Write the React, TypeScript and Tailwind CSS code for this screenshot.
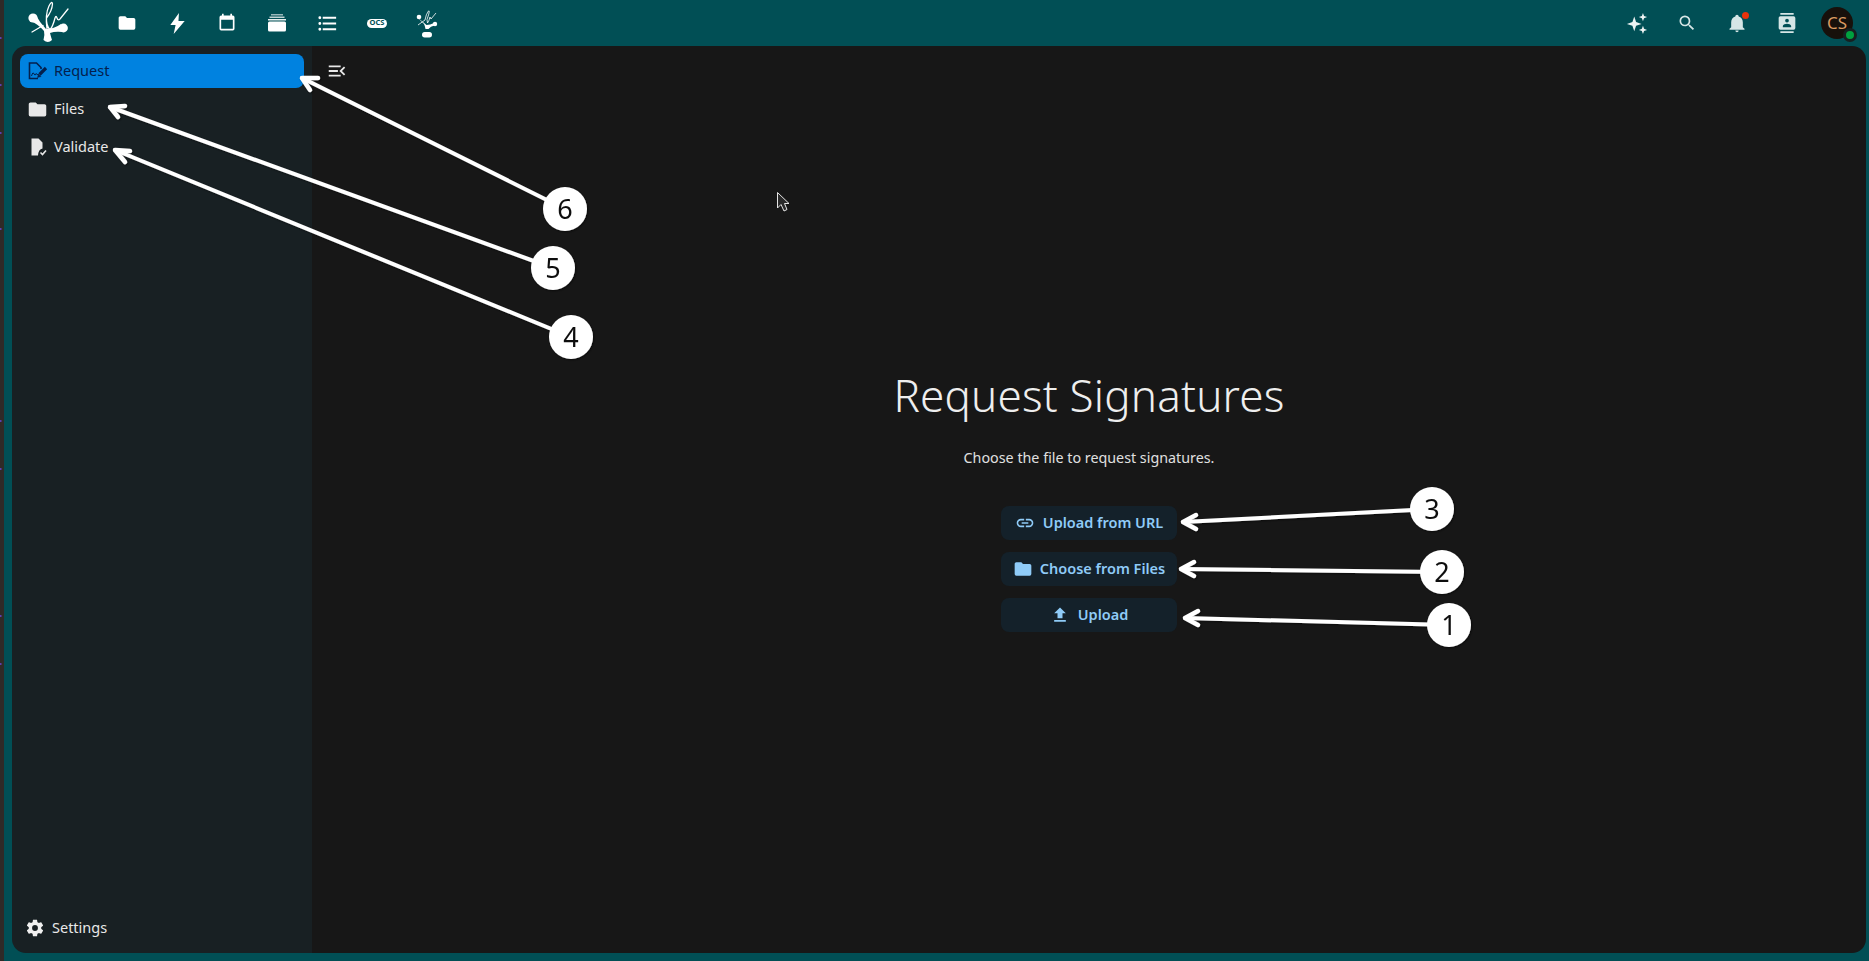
const FONT = "font-['Noto_Sans',sans-serif]";

// mdi paths used across the page
const ICONS = {
  folder: 'M10,4H4C2.89,4 2,4.89 2,6V18A2,2 0 0,0 4,20H20A2,2 0 0,0 22,18V8C22,6.89 21.1,6 20,6H12L10,4Z',
  bolt: 'M13.5 1 4.5 13.5H10L8 23 19.5 9.5H13L13.5 1Z',
  calendar: 'M19 3h-1V1h-2v2H8V1H6v2H5a2 2 0 0 0-2 2v14a2 2 0 0 0 2 2h14a2 2 0 0 0 2-2V5a2 2 0 0 0-2-2zm0 16H5V8h14v11z',
  list: 'M7,5H21V7H7V5M7,13V11H21V13H7M4,4.5A1.5,1.5 0 0,1 5.5,6A1.5,1.5 0 0,1 4,7.5A1.5,1.5 0 0,1 2.5,6A1.5,1.5 0 0,1 4,4.5M4,10.5A1.5,1.5 0 0,1 5.5,12A1.5,1.5 0 0,1 4,13.5A1.5,1.5 0 0,1 2.5,12A1.5,1.5 0 0,1 4,10.5M7,19V17H21V19H7M4,16.5A1.5,1.5 0 0,1 5.5,18A1.5,1.5 0 0,1 4,19.5A1.5,1.5 0 0,1 2.5,18A1.5,1.5 0 0,1 4,16.5Z',
  search: 'M9.5,3A6.5,6.5 0 0,1 16,9.5C16,11.11 15.41,12.59 14.44,13.73L14.71,14H15.5L20.5,19L19,20.5L14,15.5V14.71L13.73,14.44C12.59,15.41 11.11,16 9.5,16A6.5,6.5 0 0,1 3,9.5A6.5,6.5 0 0,1 9.5,3M9.5,5C7,5 5,7 5,9.5C5,12 7,14 9.5,14C12,14 14,12 14,9.5C14,7 12,5 9.5,5Z',
  bell: 'M21,19V20H3V19L5,17V11C5,7.9 7.03,5.17 10,4.29C10,4.19 10,4.1 10,4A2,2 0 0,1 12,2A2,2 0 0,1 14,4C14,4.1 14,4.19 14,4.29C16.97,5.17 19,7.9 19,11V17L21,19M14,21A2,2 0 0,1 12,23A2,2 0 0,1 10,21',
  contacts: 'M20,0H4V2H20V0M4,24H20V22H4V24M20,4H4A2,2 0 0,0 2,6V18A2,2 0 0,0 4,20H20A2,2 0 0,0 22,18V6A2,2 0 0,0 20,4M12,6.75A2.25,2.25 0 0,1 14.25,9A2.25,2.25 0 0,1 12,11.25A2.25,2.25 0 0,1 9.75,9A2.25,2.25 0 0,1 12,6.75M17,17H7V15.5C7,13.83 10.33,13 12,13C13.67,13 17,13.83 17,15.5V17Z',
  cog: 'M12,15.5A3.5,3.5 0 0,1 8.5,12A3.5,3.5 0 0,1 12,8.5A3.5,3.5 0 0,1 15.5,12A3.5,3.5 0 0,1 12,15.5M19.43,12.97C19.47,12.65 19.5,12.33 19.5,12C19.5,11.67 19.47,11.34 19.43,11L21.54,9.37C21.73,9.22 21.78,8.95 21.66,8.73L19.66,5.27C19.54,5.05 19.27,4.96 19.05,5.05L16.56,6.05C16.04,5.66 15.5,5.32 14.87,5.07L14.5,2.42C14.46,2.18 14.25,2 14,2H10C9.75,2 9.54,2.18 9.5,2.42L9.13,5.07C8.5,5.32 7.96,5.66 7.44,6.05L4.95,5.05C4.73,4.96 4.46,5.05 4.34,5.27L2.34,8.73C2.21,8.95 2.27,9.22 2.46,9.37L4.57,11C4.53,11.34 4.5,11.67 4.5,12C4.5,12.33 4.53,12.65 4.57,12.97L2.46,14.63C2.27,14.78 2.21,15.05 2.34,15.27L4.34,18.73C4.46,18.95 4.73,19.03 4.95,18.95L7.44,17.94C7.96,18.34 8.5,18.68 9.13,18.93L9.5,21.58C9.54,21.82 9.75,22 10,22H14C14.25,22 14.46,21.82 14.5,21.58L14.87,18.93C15.5,18.67 16.04,18.34 16.56,17.94L19.05,18.95C19.27,19.03 19.54,18.95 19.66,18.73L21.66,15.27C21.78,15.05 21.73,14.78 21.54,14.63L19.43,12.97Z',
  link: 'M3.9,12C3.9,10.29 5.29,8.9 7,8.9H11V7H7A5,5 0 0,0 2,12A5,5 0 0,0 7,17H11V15.1H7C5.29,15.1 3.9,13.71 3.9,12M8,13H16V11H8V13M17,7H13V8.9H17C18.71,8.9 20.1,10.29 20.1,12C20.1,13.71 18.71,15.1 17,15.1H13V17H17A5,5 0 0,0 22,12A5,5 0 0,0 17,7Z',
  upload: 'M9,16V10H5L12,3L19,10H15V16H9M5,20V18H19V20H5Z',
  menuOpen: 'M21,15.61L19.59,17L14.58,12L19.59,7L21,8.39L17.44,12L21,15.61M3,6H16V8H3V6M3,13V11H13V13H3M3,18V16H16V18H3Z',
};

function Icon({ d, className }: { d: string; className: string }) {
  return (
    <svg viewBox="0 0 24 24" fill="currentColor" className={className}>
      <path d={d} />
    </svg>
  );
}

function Logo() {
  return (
    <svg viewBox="0 0 46 44" className="h-[44px] w-[46px]" fill="none">
      <circle cx="7" cy="17" r="4.6" fill="#fff" />
      <circle cx="37.5" cy="27" r="4.4" fill="#fff" />
      <path d="M4.5 20 L9.5 13.5 Q14 22 20 28 Q28 28 35 23 L37 31 Q29 30 24 32 Q25 36 26 39 Q22 43 17.5 39 Q19 34 18 30 Q12 23 4.5 20Z" fill="#fff" />
      <path
        d="M6 31 L17 24.5 M21 28 Q19 13 23 5 Q26 -1 26.5 3 Q26 10 20.5 17 Q20 24 24 29 Q27 25 29 17 Q30 14 31 17 Q32 20 34 18 L42 8"
        stroke="#fff"
        strokeWidth="1.3"
        strokeLinecap="round"
      />
    </svg>
  );
}

function SmallSign() {
  return (
    <svg viewBox="0 0 24 30" className="h-[30px] w-[24px]" fill="none">
      <circle cx="4" cy="9" r="2.3" fill="#fff" />
      <circle cx="20" cy="16" r="2.2" fill="#fff" />
      <path d="M3 10 Q8 14 11.5 17 Q15 17 19 15 L19.5 17.5 Q15.5 18 13.5 21 L10.5 21 Q10 18 9 16 Q6 13 3 10Z" fill="#fff" />
      <path d="M3 17 L10 12 Q11 6 13.5 3 Q15 2 13.5 7 Q11 12 12.5 15 Q14 13 15 9 L16 11 L21 5" stroke="#fff" strokeWidth="0.8" />
      <rect x="7" y="24" width="10" height="5.5" rx="2.7" fill="#fff" />
    </svg>
  );
}

function AppIcon({ children }: { children: React.ReactNode }) {
  return <div className="flex h-[46px] w-[50px] items-center justify-center text-white">{children}</div>;
}

function NavItem({ label, icon, active }: { label: string; icon: React.ReactNode; active?: boolean }) {
  return (
    <div
      className={
        'flex h-[34px] items-center rounded-lg pl-[7px] text-[14.5px] ' +
        (active ? 'bg-[#0082e0] text-[#04204d]' : 'text-[#e8e8e8]')
      }
    >
      <div className="flex w-[26px] items-center">{icon}</div>
      <span className="ml-[1px]">{label}</span>
    </div>
  );
}

function ActionButton({ label, icon, gap }: { label: string; icon: React.ReactNode; gap: string }) {
  return (
    <button className={'flex h-[34px] w-[176px] items-center justify-center rounded-lg bg-[#14212a] text-[14.5px] font-semibold text-[#8fcbf7] ' + gap}>
      {icon}
      <span>{label}</span>
    </button>
  );
}

const CALLOUTS = [
  { n: '6', cx: 565, cy: 209, tx: 302, ty: 78, hx: [318, 78, 310, 90] },
  { n: '5', cx: 553, cy: 268, tx: 110, ty: 107, hx: [125, 106, 118, 117] },
  { n: '4', cx: 571, cy: 337, tx: 115, ty: 150, hx: [130, 151, 125, 162] },
  { n: '3', cx: 1432, cy: 509, tx: 1183, ty: 522, hx: [1196, 515, 1196, 529] },
  { n: '2', cx: 1442, cy: 572, tx: 1181, ty: 569, hx: [1194, 562, 1194, 576] },
  { n: '1', cx: 1449, cy: 625, tx: 1185, ty: 618, hx: [1198, 611, 1198, 625] },
];

// bits of wallpaper showing on the window's left edge
const EDGE_TICKS = [37, 84, 132, 228, 420, 468, 615, 663];

// annotation arrows and the mouse pointer drawn over the page
function Annotations() {
  return (
    <svg viewBox="0 0 1869 961" className="pointer-events-none absolute inset-0 h-[961px] w-[1869px]">
      <defs>
        <filter id="sh" x="-10%" y="-10%" width="120%" height="120%">
          <feDropShadow dx="1" dy="1" stdDeviation="1.2" floodColor="#000" floodOpacity="0.55" />
        </filter>
      </defs>
      {EDGE_TICKS.map((y) => (
        <rect key={y} x="0" y={y} width="1.5" height="2" fill="#5b3fb0" />
      ))}
      {CALLOUTS.map((c) => (
        <g key={c.n} filter="url(#sh)">
          <path
            d={`M${c.cx} ${c.cy} L${c.tx} ${c.ty}`}
            stroke="#fff"
            strokeWidth="4"
            strokeLinecap="round"
            fill="none"
          />
          <path
            d={`M${c.hx[0]} ${c.hx[1]} L${c.tx} ${c.ty} L${c.hx[2]} ${c.hx[3]}`}
            stroke="#fff"
            strokeWidth="4.5"
            strokeLinecap="round"
            strokeLinejoin="round"
            fill="none"
          />
          <circle cx={c.cx} cy={c.cy} r="22" fill="#fff" />
          <text x={c.cx} y={c.cy + 9.5} textAnchor="middle" fontSize="27" fill="#111" fontFamily="Noto Sans, sans-serif">
            {c.n}
          </text>
        </g>
      ))}
      <path d="M777.5 192.5 V208 L781 204.5 L784 211 L787 209.5 L784.5 203.5 L789 203.5 Z" fill="#2a2a2a" stroke="#e5e5e5" strokeWidth="1" />
    </svg>
  );
}

export default function App() {
  return (
    <div className={'relative flex h-[961px] w-[1869px] overflow-hidden bg-[#014f55] ' + FONT}>
      <div className="w-1 shrink-0 bg-[#2f2a27]" />
      <div className="flex min-w-0 flex-1 flex-col">
        <header className="flex h-[46px] shrink-0 items-center">
          <div className="ml-[22px] mr-[30px] flex w-[46px] items-center">
            <Logo />
          </div>
          <AppIcon><Icon d={ICONS.folder} className="h-[20px] w-[20px]" /></AppIcon>
          <AppIcon><Icon d={ICONS.bolt} className="h-[23px] w-[23px]" /></AppIcon>
          <AppIcon><Icon d={ICONS.calendar} className="h-[20px] w-[20px]" /></AppIcon>
          <AppIcon>
            <svg viewBox="0 0 20 20" className="h-[20px] w-[20px]" fill="#fff">
              <rect x="4" y="1" width="12" height="1.5" opacity="0.6" />
              <rect x="2.5" y="3.5" width="15" height="1.5" opacity="0.75" />
              <rect x="1" y="6" width="18" height="1.5" opacity="0.9" />
              <rect x="1" y="8.5" width="18" height="10" rx="1.5" />
            </svg>
          </AppIcon>
          <AppIcon><Icon d={ICONS.list} className="h-[23px] w-[23px]" /></AppIcon>
          <AppIcon>
            <div className="flex h-[9px] w-[20px] items-center justify-center rounded-full bg-white">
              <span className="text-[7.5px] font-bold leading-none text-[#014f55]">OCS</span>
            </div>
          </AppIcon>
          <AppIcon><SmallSign /></AppIcon>

          <div className="ml-auto flex items-center pr-[13px]">
            <AppIcon>
              <svg viewBox="0 0 24 24" className="h-[22px] w-[22px]" fill="#eef4f4">
                <path d="M9 5 L11 11 L17 13 L11 15 L9 21 L7 15 L1 13 L7 11Z" />
                <path d="M18.5 1 L19.7 4.3 L23 5.5 L19.7 6.7 L18.5 10 L17.3 6.7 L14 5.5 L17.3 4.3Z" />
                <path d="M18.5 15 L19.7 18.3 L23 19.5 L19.7 20.7 L18.5 24 L17.3 20.7 L14 19.5 L17.3 18.3Z" />
              </svg>
            </AppIcon>
            <AppIcon><Icon d={ICONS.search} className="h-[20px] w-[20px] text-[#d6e6e6]" /></AppIcon>
            <AppIcon>
              <div className="relative">
                <Icon d={ICONS.bell} className="h-[20px] w-[20px] text-[#d6e6e6]" />
                <div className="absolute right-[-2px] top-[-1px] h-[7px] w-[7px] rounded-full bg-[#e9320b]" />
              </div>
            </AppIcon>
            <AppIcon><Icon d={ICONS.contacts} className="h-[20px] w-[20px] text-[#d6e6e6]" /></AppIcon>
            <div className="relative ml-[9px] mr-[3px] flex h-[32px] w-[32px] items-center justify-center rounded-full bg-[#17100b] text-[17px] text-[#d99a62]">
              CS
              <div className="absolute bottom-[-3px] right-[-4px] h-[14px] w-[14px] rounded-full border-[3px] border-[#162021] bg-[#00a13f]" />
            </div>
          </div>
        </header>

        <div className="mb-2 ml-2 mr-[3px] flex min-h-0 flex-1 overflow-hidden rounded-[14px]">
          <aside className="flex w-[300px] shrink-0 flex-col justify-between bg-[#182023] px-2 pb-[8px] pt-2">
            <nav className="flex flex-col gap-1">
              <NavItem
                active
                label="Request"
                icon={
                  <svg viewBox="0 0 20 20" className="ml-[1px] h-[20px] w-[20px]" fill="none" stroke="#04204d" strokeWidth="1.6">
                    <path d="M10 17.5H1.5V2H8.5L13 6.5V8" />
                    <path d="M3.5 15 Q5 10 6 13 Q7 15.5 8 12.5 Q9 14 10.5 13.5" strokeWidth="1" />
                    <path d="M11.5 13.5 L18 7" strokeWidth="3.2" />
                    <path d="M9.5 16.5 L10.5 13 L13 15.5Z" fill="#04204d" strokeWidth="0.5" />
                  </svg>
                }
              />
              <NavItem label="Files" icon={<Icon d={ICONS.folder} className="h-[21px] w-[21px] text-[#e8e8e8]" />} />
              <NavItem
                label="Validate"
                icon={
                  <svg viewBox="0 0 18 20" className="ml-[3px] h-[20px] w-[18px]" fill="#e8e8e8">
                    <path d="M1.5 1.5H8.5L12.5 5.5V11.5Q8.5 12 8 18.5H1.5Z" />
                    <path d="M10.5 15.5 L12.5 17.5 L16 13.5" fill="none" stroke="#e8e8e8" strokeWidth="1.6" />
                  </svg>
                }
              />
            </nav>
            <div className="flex h-[34px] items-center pl-[5px] text-[14.5px] text-[#e8e8e8]">
              <Icon d={ICONS.cog} className="h-[20px] w-[20px] text-[#f0f0f0]" />
              <span className="ml-[7px]">Settings</span>
            </div>
          </aside>

          <main className="relative flex min-w-0 flex-1 flex-col items-center justify-center bg-[#171717] pt-[3px]">
            <div className="absolute left-[14px] top-[14px] text-[#e8e8e8]">
              <Icon d={ICONS.menuOpen} className="h-[22px] w-[22px]" />
            </div>
            <h1 className="text-[44px] font-light leading-[50px] tracking-[0.2px] text-[#eeeeee]">Request Signatures</h1>
            <p className="mt-[26px] text-[14.3px] leading-[24px] text-[#e0e0e0]">Choose the file to request signatures.</p>
            <div className="mt-[36px] flex flex-col gap-3">
              <ActionButton gap="gap-[8px]" label="Upload from URL" icon={<Icon d={ICONS.link} className="h-[20px] w-[20px]" />} />
              <ActionButton gap="gap-[7px]" label="Choose from Files" icon={<Icon d={ICONS.folder} className="h-[20px] w-[20px]" />} />
              <ActionButton gap="gap-[8px]" label="Upload" icon={<Icon d={ICONS.upload} className="h-[20px] w-[20px]" />} />
            </div>
          </main>
        </div>
      </div>
      <Annotations />
    </div>
  );
}
